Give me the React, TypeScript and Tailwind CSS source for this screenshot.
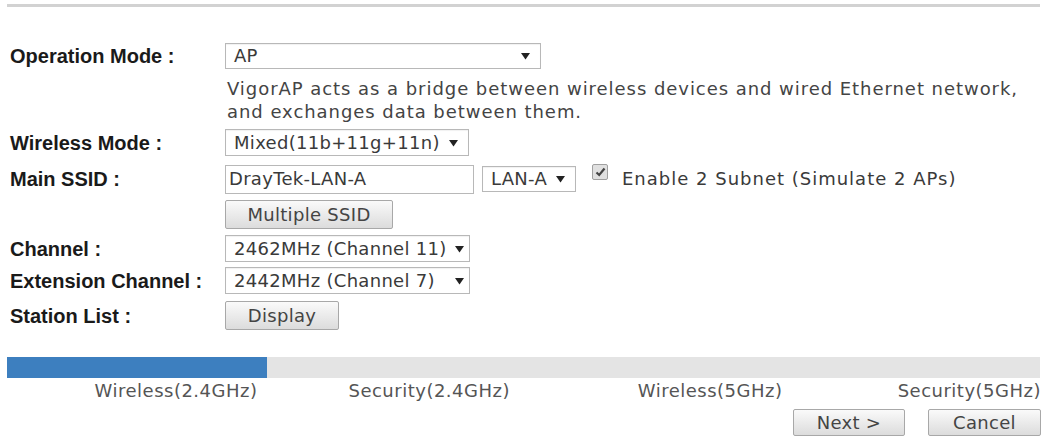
import React from 'react';

const ctl = "font-['DejaVu_Sans',Verdana,sans-serif] text-[18px] text-[#3a3a3a]";
const lbl = "w-[215px] shrink-0 font-['Liberation_Sans',Arial,sans-serif] font-bold text-[20px] text-[#1a1a1a] leading-none";

function Arrow() {
  return (
    <svg width="9" height="8" viewBox="0 0 9 8" className="shrink-0">
      <path d="M0 1 L9 1 L4.5 7.5 Z" fill="#222" />
    </svg>
  );
}

function Select({ text, w, h = 'h-[27px]', pr = 'pr-[10px]' }: { text: string; w: string; h?: string; pr?: string }) {
  return (
    <div className={`${w} ${h} ${pr} ${ctl} tracking-[0.3px] flex items-center justify-between pl-[8px] border border-[#b8b8b8] bg-white shadow-[inset_0_1px_1px_rgba(0,0,0,0.06)] leading-none`}>
      <span>{text}</span>
      <Arrow />
    </div>
  );
}

function Button({ text, w, h = 'h-[29px]' }: { text: string; w: string; h?: string }) {
  return (
    <div className={`${w} ${h} ${ctl} text-[#444] tracking-[0.3px] flex items-center justify-center border border-[#a8a8a8] rounded-[2px] bg-gradient-to-b from-[#fafafa] to-[#dcdcdc] leading-none`}>
      {text}
    </div>
  );
}

function Row({ label, mt, children }: { label?: string; mt: string; children: React.ReactNode }) {
  return (
    <div className={`flex items-center ${mt}`}>
      <div className={lbl}>{label}</div>
      {children}
    </div>
  );
}

export default function App() {
  return (
    <div className="w-[1051px] h-[440px] bg-white overflow-hidden">
      <div className="ml-[7px] mt-[4px] w-[1033px] h-[3px] bg-[#d2d2d2]" />

      <div className="pl-[10px]">
        <Row label="Operation Mode :" mt="mt-[36px]">
          <Select text="AP" w="w-[316px]" h="h-[26px]" />
        </Row>
        <Row mt="mt-[8px]">
          <p className={`${ctl} text-[#444] leading-[23px] pl-[2px] tracking-[0.95px]`}>
            VigorAP acts as a bridge between wireless devices and wired Ethernet network,
            <br />
            and exchanges data between them.
          </p>
        </Row>
        <Row label="Wireless Mode :" mt="mt-[6px]">
          <Select text="Mixed(11b+11g+11n)" w="w-[244px]" />
        </Row>
        <Row label="Main SSID :" mt="mt-[8px]">
          <div className={`w-[249px] h-[29px] ${ctl} tracking-[0.3px] flex items-center pl-[3px] border border-[#b8b8b8] bg-white leading-none`}>
            DrayTek-LAN-A
          </div>
          <div className="ml-[8px]">
            <Select text="LAN-A" w="w-[94px]" h="h-[26px]" />
          </div>
          <div className="ml-[16px] mb-[14px] w-[16px] h-[16px] border border-[#a0a0a0] bg-[#e0e0e0] rounded-[2px] flex items-center justify-center">
            <svg width="11" height="10" viewBox="0 0 11 10">
              <path d="M1.5 5.5 L4.2 8 L9.5 1.5" stroke="#444" strokeWidth="2.2" fill="none" />
            </svg>
          </div>
          <span className={`${ctl} ml-[14px] leading-none tracking-[1px]`}>Enable 2 Subnet (Simulate 2 APs)</span>
        </Row>
        <Row mt="mt-[6px]">
          <Button text="Multiple SSID" w="w-[168px]" />
        </Row>
        <Row label="Channel :" mt="mt-[6px]">
          <Select text="2462MHz (Channel 11)" w="w-[245px]" pr="pr-[5px]" />
        </Row>
        <Row label="Extension Channel :" mt="mt-[5px]">
          <Select text="2442MHz (Channel 7)" w="w-[245px]" pr="pr-[5px]" />
        </Row>
        <Row label="Station List :" mt="mt-[7px]">
          <Button text="Display" w="w-[114px]" />
        </Row>
      </div>

      <div className="ml-[7px] mt-[27px] w-[1033px] h-[21px] bg-[#e4e4e4] flex">
        <div className="w-[260px] h-full bg-[#3d7fbf]" />
      </div>

      <div className={`ml-[7px] w-[1034px] grid grid-cols-4 mt-[3px] ${ctl} text-[#555] leading-[20px] tracking-[0.5px]`}>
        <div className="text-right pr-[8px]">Wireless(2.4GHz)</div>
        <div className="text-right pr-[14px]">Security(2.4GHz)</div>
        <div className="text-right">Wireless(5GHz)</div>
        <div className="text-right">Security(5GHz)</div>
      </div>

      <div className="flex justify-end gap-[23px] pr-[10px] mt-[8px]">
        <Button text="Next >" w="w-[112px]" h="h-[27px]" />
        <Button text="Cancel" w="w-[113px]" h="h-[27px]" />
      </div>
    </div>
  );
}
